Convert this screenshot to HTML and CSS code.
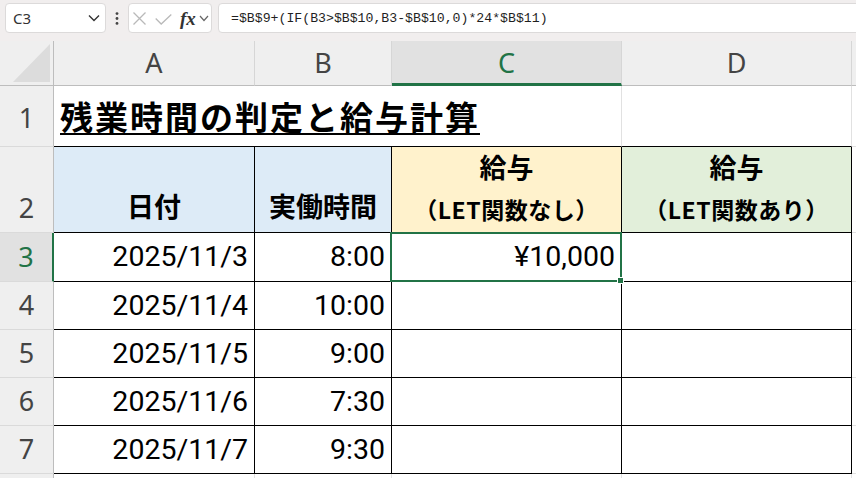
FILE: index.html
```html
<!DOCTYPE html>
<html lang="ja">
<head>
<meta charset="utf-8">
<title>残業時間の判定と給与計算</title>
<link rel="stylesheet" href="styles.css">
</head>
<body>
<div class="toolbar">
  <div class="namebox">
    <span>C3</span>
    <svg class="chev" width="12" height="8" viewBox="0 0 12 8"><polyline points="1,1.5 6,6.5 11,1.5" fill="none" stroke="#333" stroke-width="1.4"/></svg>
  </div>
  <div class="dots">
    <svg width="4" height="13" viewBox="0 0 4 13"><circle cx="2" cy="1.6" r="1.4" fill="#444"/><circle cx="2" cy="6.5" r="1.4" fill="#444"/><circle cx="2" cy="11.4" r="1.4" fill="#444"/></svg>
  </div>
  <div class="fxbox">
    <svg class="ic-x" width="13" height="13" viewBox="0 0 13 13"><path d="M0.5 0.5 L12.5 12.5 M12.5 0.5 L0.5 12.5" stroke="#b9b9b9" stroke-width="1.3" fill="none"/></svg>
    <svg class="ic-ok" width="17" height="11" viewBox="0 0 17 11"><polyline points="0.7,4.5 6.2,10 16.3,0.6" stroke="#b9b9b9" stroke-width="1.3" fill="none"/></svg>
    <span class="fx">fx</span>
    <svg class="ic-chev" width="10" height="7" viewBox="0 0 10 7"><polyline points="1,1 5,5.5 9,1" fill="none" stroke="#666" stroke-width="1.2"/></svg>
  </div>
  <div class="formula">=$B$9+(IF(B3&gt;$B$10,B3-$B$10,0)*24*$B$11)</div>
</div>

<div class="sheet">
  <!-- header row -->
  <div class="c corner"><div class="tri"></div></div>
  <div class="c ch">A</div>
  <div class="c ch">B</div>
  <div class="c ch selcol">C</div>
  <div class="c ch">D</div>
  <div class="c ch last"></div>

  <!-- row 1 -->
  <div class="c rh r1">1</div>
  <div class="c title"><span>残業時間の判定と給与計算</span></div>
  <div class="c d1"></div>
  <div class="c e"></div>

  <!-- row 2 -->
  <div class="c rh">2</div>
  <div class="c t hd blue"><span class="l1">日付</span></div>
  <div class="c t hd blue"><span class="l1">実働時間</span></div>
  <div class="c t hd yellow"><span class="l1 top">給与</span><span class="l2">（LET関数なし）</span></div>
  <div class="c t hd green"><span class="l1 top">給与</span><span class="l2">（LET関数あり）</span></div>
  <div class="c e"></div>

  <!-- row 3 -->
  <div class="c rh selrow">3</div>
  <div class="c t num">2025/11/3</div>
  <div class="c t num">8:00</div>
  <div class="c t num active">¥10,000<div class="selbox"></div><div class="handle"></div></div>
  <div class="c t"></div>
  <div class="c e"></div>

  <!-- row 4 -->
  <div class="c rh">4</div>
  <div class="c t num">2025/11/4</div>
  <div class="c t num">10:00</div>
  <div class="c t"></div>
  <div class="c t"></div>
  <div class="c e"></div>

  <!-- row 5 -->
  <div class="c rh">5</div>
  <div class="c t num">2025/11/5</div>
  <div class="c t num">9:00</div>
  <div class="c t"></div>
  <div class="c t"></div>
  <div class="c e"></div>

  <!-- row 6 -->
  <div class="c rh">6</div>
  <div class="c t num">2025/11/6</div>
  <div class="c t num">7:30</div>
  <div class="c t"></div>
  <div class="c t"></div>
  <div class="c e"></div>

  <!-- row 7 -->
  <div class="c rh">7</div>
  <div class="c t num">2025/11/7</div>
  <div class="c t num">9:30</div>
  <div class="c t"></div>
  <div class="c t"></div>
  <div class="c e"></div>

  <!-- row 8 (partially visible) -->
  <div class="c rh"></div>
  <div class="c"></div>
  <div class="c"></div>
  <div class="c"></div>
  <div class="c"></div>
  <div class="c e"></div>
</div>
</body>
</html>
```

FILE: styles.css
```css
* { box-sizing: border-box; }

html, body {
  margin: 0;
  width: 856px;
  height: 478px;
  overflow: hidden;
  background: #ffffff;
  font-family: "Noto Sans", "Noto Sans CJK JP", sans-serif;
}

/* ---------- formula bar ---------- */
.toolbar {
  height: 41px;
  background: #f1eeee;
  display: flex;
  align-items: flex-start;
  padding: 3px 0 0 5px;
}

.namebox {
  width: 101px;
  height: 30px;
  background: #ffffff;
  border: 1px solid #dcdada;
  border-radius: 4px;
  display: flex;
  align-items: center;
  justify-content: space-between;
  padding: 0 5px 0 7px;
  font-size: 15px;
  color: #333333;
}

.dots {
  width: 22px;
  height: 30px;
  display: flex;
  align-items: center;
  justify-content: center;
}

.fxbox {
  width: 84px;
  height: 30px;
  background: #ffffff;
  border: 1px solid #dcdada;
  border-radius: 4px;
  display: flex;
  align-items: center;
  padding-left: 4px;
}

.ic-ok { margin-left: 9px; margin-top: 2px; }

.fx {
  margin-left: 8px;
  font-family: "Liberation Serif", serif;
  font-style: italic;
  font-weight: 700;
  font-size: 19px;
  color: #333333;
  line-height: 1;
}

.ic-chev { margin-left: 3px; }

.formula {
  flex: 1;
  height: 30px;
  margin-left: 6px;
  margin-right: -10px;
  background: #ffffff;
  border: 1px solid #dcdada;
  border-radius: 4px;
  display: flex;
  align-items: center;
  padding-left: 12px;
  font-family: "Liberation Mono", monospace;
  font-size: 13.2px;
  color: #1f1f1f;
}

/* ---------- sheet grid ---------- */
.sheet {
  display: grid;
  grid-template-columns: 54px 201px 137px 230px 230px 1fr;
  grid-template-rows: 45px 61px 86px 49px 48px 48px 48px 48px 1fr;
  height: 437px;
}

.c {
  border-right: 1px solid #e1e1e1;
  border-bottom: 1px solid #e1e1e1;
  display: flex;
  align-items: center;
  min-width: 0;
}

.corner {
  background: #efefef;
  border-right-color: #bdbdbd;
  border-bottom-color: #bdbdbd;
  justify-content: flex-end;
  align-items: flex-end;
  padding: 0 3px 3px 0;
}

.tri {
  width: 37px;
  height: 38px;
  background: #dcdcdc;
  clip-path: polygon(100% 0, 100% 100%, 0 100%);
}

.ch {
  background: #efefef;
  justify-content: center;
  border-right-color: #d6d6d6;
  border-bottom-color: #bdbdbd;
  font-size: 27px;
  color: #444444;
  padding-bottom: 2px;
}

.ch.selcol {
  background: #e1e1e1;
  color: #217346;
  border-bottom: 3px solid #217346;
  padding-bottom: 0;
}

.ch.last { border-right: none; }

.rh {
  background: #efefef;
  justify-content: center;
  align-items: flex-end;
  border-right-color: #bdbdbd;
  border-bottom-color: #dadada;
  font-size: 27px;
  color: #444444;
  padding-bottom: 6px;
  overflow: hidden;
}

.rh.r1 { padding-bottom: 10px; }

.rh.selrow {
  background: #e1e1e1;
  color: #217346;
  border-right: 2px solid #217346;
}

.e { border-right: none; }

/* title */
.title {
  grid-column: span 3;
  border-bottom-color: #000000;
  padding-left: 6px;
  font-family: "Noto Sans CJK JP", sans-serif;
  font-weight: 700;
  font-size: 33px;
  letter-spacing: 2px;
  white-space: nowrap;
  color: #000000;
}

.title span {
  text-decoration: underline;
  text-decoration-thickness: 2px;
  text-underline-offset: 3px;
}

.d1 { border-bottom-color: #000000; }

/* table cells */
.t {
  border-right-color: #000000;
  border-bottom-color: #000000;
}

.hd {
  flex-direction: column;
  justify-content: flex-end;
  align-items: center;
  padding-bottom: 8px;
  font-family: "Noto Sans CJK JP", sans-serif;
  font-weight: 700;
  color: #000000;
  white-space: nowrap;
}

.hd .l1 {
  font-size: 27px;
  line-height: 36px;
}

.hd .l1.top { margin-bottom: 9px; }

.hd .l2 {
  font-size: 23px;
  line-height: 30px;
  letter-spacing: 0.5px;
}

.blue { background: #ddebf7; }
.yellow { background: #fff2cc; }
.green { background: #e2efda; }

.num {
  justify-content: flex-end;
  padding: 0 6px 1px 0;
  font-family: Roboto, "Liberation Sans", sans-serif;
  font-size: 28.5px;
  color: #000000;
  white-space: nowrap;
}

.active { position: relative; }

.selbox {
  position: absolute;
  left: -2px;
  top: -1px;
  right: -1px;
  bottom: -1px;
  border: 2px solid #217346;
  z-index: 2;
}

.handle {
  position: absolute;
  right: -2px;
  bottom: -2px;
  width: 5px;
  height: 5px;
  background: #217346;
  outline: 1px solid #ffffff;
  z-index: 3;
}
```
